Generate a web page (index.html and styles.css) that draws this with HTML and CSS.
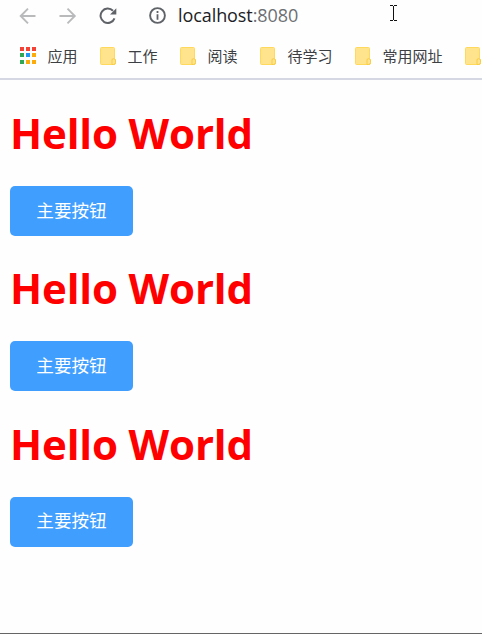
FILE: index.html
```
<!DOCTYPE html>
<html lang="zh-CN">
<head>
<meta charset="utf-8">
<title>localhost:8080</title>
<link rel="stylesheet" href="styles.css">
</head>
<body>
<svg class="defs" aria-hidden="true">
  <symbol id="folder" viewBox="0 0 16 18">
    <path d="M1.500.5h12q1 0 1 1v10.500q1 .4 1 1.500v2.500q0 1.500-1.500 1.500h-12.500q-1 0-1-1v-15q0-1 1-1z" fill="#ffe38d" stroke="#ffd95c"/>
    <path d="M12 17.500v-4.500q0-1.300 1.500-1.300t2 1.300v2.500q0 2-2 2z" fill="#ffe38d" stroke="#f8cd45"/>
  </symbol>
</svg>
<header class="browser">
  <div class="toolbar">
    <svg class="nav" viewBox="0 0 18 18"><path d="M16.500 9H2M9 1.700L1.700 9 9 16.300" fill="none" stroke="#b9babc" stroke-width="1.900"/></svg>
    <svg class="nav" viewBox="0 0 18 18"><path d="M.5 9h14.500M8.500 1.700L15.800 9l-7.300 7.300" fill="none" stroke="#b9babc" stroke-width="1.900"/></svg>
    <svg class="nav" viewBox="0 0 18 18"><path d="M14 3.800A7.200 7.200 0 1 0 15.500 11.300" fill="none" stroke="#5f6368" stroke-width="2"/><path d="M17.300 1.200v6.300h-6.300z" fill="#5f6368"/></svg>
    <svg class="info" viewBox="0 0 17 17"><circle cx="8.500" cy="8.500" r="7.400" fill="none" stroke="#5f6368" stroke-width="1.900"/><path d="M7.600 4h1.800v2H7.600zM7.600 7.200h1.800v5.500H7.600z" fill="#5f6368"/></svg>
    <div class="address">localhost<span class="port">:8080</span></div>
    <svg class="cursor" viewBox="0 0 7 16"><path d="M0 0h3v1H0zM4 0h3v1H4zM3 1h1v14H3zM0 15h3v1H0zM4 15h3v1H4z" fill="#111"/></svg>
  </div>
  <nav class="bookmarks">
    <div class="bookmark">
      <svg class="apps" viewBox="0 0 16 17">
        <path d="M0 0h4v4H0zM6 0h4v4H6zM12 0h4v4h-4z" fill="#f44336"/>
        <path d="M0 6h4v4H0zM0 13h4v4H0z" fill="#30a853"/>
        <path d="M6 6h4v4H6z" fill="#2196f3"/>
        <path d="M12 6h4v4h-4zM6 13h4v4H6zM12 13h4v4h-4z" fill="#fbac0b"/>
      </svg>
      <span>应用</span>
    </div>
    <div class="bookmark"><svg class="folder"><use href="#folder"/></svg><span>工作</span></div>
    <div class="bookmark"><svg class="folder"><use href="#folder"/></svg><span>阅读</span></div>
    <div class="bookmark"><svg class="folder"><use href="#folder"/></svg><span>待学习</span></div>
    <div class="bookmark"><svg class="folder"><use href="#folder"/></svg><span>常用网址</span></div>
    <div class="bookmark"><svg class="folder"><use href="#folder"/></svg></div>
  </nav>
</header>
<main class="page">
  <section class="block"><h1>Hello World</h1><button class="primary">主要按钮</button></section>
  <section class="block"><h1>Hello World</h1><button class="primary">主要按钮</button></section>
  <section class="block"><h1>Hello World</h1><button class="primary">主要按钮</button></section>
</main>
</body>
</html>
```
FILE: styles.css
```
* { box-sizing: border-box; }
body {
  margin: 0;
  height: 634px;
  overflow: hidden;
  display: flex;
  flex-direction: column;
  background: #fefefe;
  border-bottom: 1px solid #656565;
  font-family: "Open Sans", "Noto Sans CJK SC", sans-serif;
}
.defs { position: absolute; width: 0; height: 0; }
svg { display: block; flex: none; }
.browser {
  height: 80px;
  border-bottom: 2px solid #d5d8e3;
}
.toolbar {
  height: 31px;
  padding-left: 19px;
  display: flex;
  align-items: center;
}
.nav { width: 18px; height: 18px; margin-right: 22px; }
.info { width: 17px; height: 17px; margin: 0 12px 0 10px; }
.address {
  width: 212px;
  height: 32px;
  font-size: 18px;
  line-height: 30px;
  letter-spacing: -0.08px;
  color: #202124;
}
.port { color: #6c6f73; }
.cursor { width: 7px; height: 16px; margin-top: -5px; }
.bookmarks {
  height: 49px;
  padding: 2px 0 0 20px;
  display: flex;
  align-items: flex-start;
  gap: 22px;
}
.bookmark {
  height: 46px;
  flex: none;
  display: flex;
  align-items: center;
  gap: 12px;
  font-family: "Noto Sans CJK SC", sans-serif;
  font-size: 15px;
  font-weight: 400;
  color: #3c4043;
}
.bookmark span {
  margin: -2px 0.5px 0 -0.5px;
}
.apps { width: 16px; height: 17px; margin-top: -1px; }
.folder { width: 16px; height: 18px; }
.page {
  padding: 23px 10px 0;
  display: flex;
  flex-direction: column;
  gap: 23.400px;
}
.block { height: 132px; }
h1 {
  margin: 0 0 23px;
  font-size: 42px;
  line-height: 60px;
  font-weight: 700;
  letter-spacing: -0.15px;
  color: #f00;
}
.primary {
  display: block;
  width: 123px;
  height: 50px;
  padding: 0 0 4px;
  border: 0;
  border-radius: 5px;
  background: #409eff;
  color: #fff;
  font-family: "Noto Sans CJK SC", sans-serif;
  font-size: 17.600px;
  font-weight: 400;
}
```
